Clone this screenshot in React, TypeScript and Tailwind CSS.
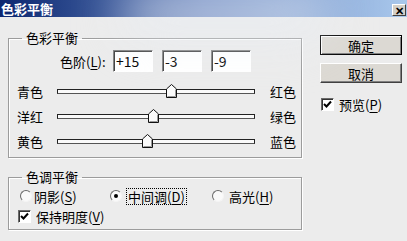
import React from "react";

const font = { fontFamily: '"Noto Sans CJK SC", "Noto Sans", sans-serif' };

const sliders = [
  { left: "青色", right: "红色", value: 15 },
  { left: "洋红", right: "绿色", value: -3 },
  { left: "黄色", right: "蓝色", value: -9 },
];

const Key = ({ k }: { k: string }) => (
  <>
    (<span className="underline underline-offset-2">{k}</span>)
  </>
);

const Field = ({ value }: { value: string }) => (
  <div className="flex h-[22px] w-[40px] items-center border border-t-[#808080] border-l-[#808080] border-r-white border-b-white bg-white pl-[2px] text-[14px] leading-none shadow-[inset_1px_1px_0_#404040]">
    {value}
  </div>
);

const Thumb = () => (
  <svg width="11" height="14" viewBox="0 0 11 14">
    <path d="M0.5 5 L5.5 0.5 L10.5 5 L10.5 13.5 L0.5 13.5 Z" fill="#fbfbfb" stroke="#111" />
    <path d="M1.5 12.5 L9.5 12.5 L9.5 5.5" fill="none" stroke="#9a9a9a" />
  </svg>
);

const Radio = ({ on }: { on?: boolean }) => (
  <div className="flex h-[12px] w-[12px] items-center justify-center rounded-full border border-t-[#6a6a6a] border-l-[#6a6a6a] border-r-[#f4f4f4] border-b-[#f4f4f4] bg-[#fafafa]">
    {on && <div className="h-[4px] w-[4px] rounded-full bg-black" />}
  </div>
);

const Check = () => (
  <div className="flex h-[13px] w-[13px] items-center justify-center border border-t-[#6a6a6a] border-l-[#6a6a6a] border-r-white border-b-white bg-white shadow-[inset_1px_1px_0_#333]">
    <svg width="9" height="9" viewBox="0 0 9 9">
      <path d="M1 4 L3.5 6.5 L8 1.5" fill="none" stroke="#000" strokeWidth="2" />
    </svg>
  </div>
);

const Button = ({ label, dflt }: { label: string; dflt?: boolean }) => (
  <div
    className={
      "flex h-[20px] w-[82px] items-center justify-center bg-[#dcd9d3] text-[13px] leading-none " +
      (dflt
        ? "border border-black shadow-[inset_1px_1px_0_#fff,inset_-1px_-1px_0_#808080]"
        : "border border-t-white border-l-white border-r-[#404040] border-b-[#404040] shadow-[inset_-1px_-1px_0_#808080]")
    }
  >
    {label}
  </div>
);

export default function App() {
  return (
    <div
      className="relative flex h-[241px] w-[407px] flex-col overflow-hidden bg-[#ececec] text-black"
      style={font}
    >
      {/* title bar */}
      <div className="flex h-[17px] items-center justify-between bg-gradient-to-r from-[#0c2670] via-[#6a86c0] to-[#a9c8ec]">
        <span className="pl-[1px] text-[13px] font-bold leading-none text-white">色彩平衡</span>
        <div className="mr-[1px] mt-[3px] flex h-[12px] w-[14px] items-center justify-center border border-t-white border-l-white border-r-[#404040] border-b-[#404040] bg-[#d4d0c8] text-[11px] font-bold leading-none">
          ✕
        </div>
      </div>
      {/* blurred smear over the title */}
      <div className="pointer-events-none absolute left-[120px] top-[-10px] h-[50px] w-[210px] rounded-full bg-[#e8ecf4]/60 blur-xl" />

      <div className="flex">
        <div className="ml-[8px] w-[294px]">
          <fieldset className="mt-[14px] border border-[#9c9c9c] pb-[3px] pt-[5px] text-[13px] shadow-[1px_1px_0_#fff,inset_1px_1px_0_#fff]">
            <legend className="ml-[13px] px-[4px] leading-[14px]">色彩平衡</legend>
            <div className="flex items-center">
              <span className="ml-[51px] w-[53px] leading-none">
                色阶<Key k="L" />:
              </span>
              <div className="ml-[0px] flex gap-[9px]">
                <Field value="+15" />
                <Field value="-3" />
                <Field value="-9" />
              </div>
            </div>
            <div className="mt-[7px] flex flex-col">
              {sliders.map((s) => (
                <div key={s.left} className="flex h-[25px] items-center">
                  <span className="ml-[8px] w-[40px] leading-none">{s.left}</span>
                  <div className="relative h-[5px] w-[198px] border border-[#222] border-b-[#555] bg-[#fafafa]">
                    <div
                      className="absolute top-[-6px]"
                      style={{ left: ((s.value + 100) / 200) * 198 - 6 }}
                    >
                      <Thumb />
                    </div>
                  </div>
                  <span className="ml-[15px] leading-none">{s.right}</span>
                </div>
              ))}
            </div>
          </fieldset>

          <fieldset className="mt-[12px] h-[60px] border border-[#9c9c9c] pt-[5px] text-[13px] shadow-[1px_1px_0_#fff,inset_1px_1px_0_#fff]">
            <legend className="ml-[13px] px-[4px] leading-[14px]">色调平衡</legend>
            <div className="flex h-[14px] items-center">
              <div className="ml-[11px] flex w-[90px] items-center">
                <Radio />
                <span className="ml-[2px] leading-none">
                  阴影<Key k="S" />
                </span>
              </div>
              <div className="flex w-[102px] items-center">
                <Radio on />
                <span className="ml-[4px] border border-dotted border-black px-[1px] py-[1px] leading-none">
                  中间调<Key k="D" />
                </span>
              </div>
              <div className="flex items-center">
                <Radio />
                <span className="ml-[5px] leading-none">
                  高光<Key k="H" />
                </span>
              </div>
            </div>
            <div className="mt-[7px] flex items-center">
              <div className="ml-[9px]">
                <Check />
              </div>
              <span className="ml-[5px] leading-none">
                保持明度<Key k="V" />
              </span>
            </div>
          </fieldset>
        </div>

        <div className="ml-[18px] mt-[18px] flex flex-col">
          <Button label="确定" dflt />
          <div className="mt-[8px]">
            <Button label="取消" />
          </div>
          <div className="ml-[1px] mt-[15px] flex items-center text-[13px]">
            <Check />
            <span className="ml-[5px] leading-none">
              预览<Key k="P" />
            </span>
          </div>
        </div>
      </div>
    </div>
  );
}
